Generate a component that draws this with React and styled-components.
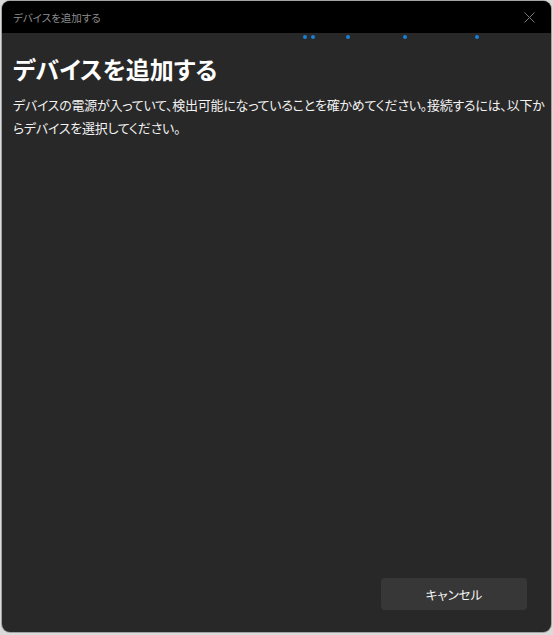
import styled, { createGlobalStyle } from 'styled-components';

const GlobalStyle = createGlobalStyle`
  html, body {
    margin: 0;
    padding: 0;
    background: #dadada;
  }
  body {
    font-family: "Noto Sans CJK JP", "Noto Sans", sans-serif;
    font-feature-settings: "palt";
  }
`;

const Page = styled.div`
  width: 553px;
  height: 635px;
  padding: 1px 2px 3px 2px;
  box-sizing: border-box;
`;

const Window = styled.div`
  height: 100%;
  display: flex;
  flex-direction: column;
  border-radius: 8px;
  overflow: hidden;
  background: #282828;
  box-shadow: 0 0 0 1px rgba(0, 0, 0, 0.25);
`;

const TitleBar = styled.div`
  height: 32px;
  flex: none;
  display: flex;
  align-items: center;
  justify-content: space-between;
  padding: 0 14px 0 11px;
  background: #000;
  color: #8c8c8c;
  font-size: 10.5px;
`;

const CloseButton = styled.button`
  border: none;
  background: none;
  padding: 0;
  width: 16px;
  height: 16px;
  display: flex;
  align-items: center;
  justify-content: center;
  color: #7a7a7a;
`;

const Progress = styled.div`
  position: relative;
  height: 8px;
  flex: none;
`;

const Dot = styled.span`
  position: absolute;
  top: 2px;
  width: 4px;
  height: 4px;
  border-radius: 50%;
  background: #1a7fd6;
`;

const Content = styled.div`
  flex: 1;
  padding: 12px 11px 0;
  color: #fff;
`;

const Heading = styled.h1`
  margin: 0 0 8px;
  font-size: 24px;
  font-weight: 600;
  line-height: 32px;
`;

const Description = styled.p`
  margin: 0;
  font-size: 13px;
  line-height: 23px;
  letter-spacing: -0.25px;
  color: #f2f2f2;
  white-space: nowrap;
`;

const Footer = styled.div`
  display: flex;
  justify-content: flex-end;
  padding: 0 24px 22px;
`;

const Button = styled.button`
  width: 146px;
  height: 32px;
  border: none;
  border-radius: 4px;
  background: #373737;
  color: #f5f5f5;
  font-family: inherit;
  font-feature-settings: "palt";
  font-size: 12.5px;
  cursor: pointer;
`;

const dots = [305, 313, 348, 405, 477];

export default function App() {
  return (
    <>
      <GlobalStyle />
      <Page>
        <Window>
          <TitleBar>
            <span>デバイスを追加する</span>
            <CloseButton aria-label="閉じる">
              <svg width="11" height="11" viewBox="0 0 11 11">
                <path d="M0.5 0.5 L10.5 10.5 M10.5 0.5 L0.5 10.5" stroke="currentColor" strokeWidth="1" />
              </svg>
            </CloseButton>
          </TitleBar>
          <Progress>
            {dots.map((x) => (
              <Dot key={x} style={{ left: x - 4 }} />
            ))}
          </Progress>
          <Content>
            <Heading>デバイスを追加する</Heading>
            <Description>
              デバイスの電源が入っていて、検出可能になっていることを確かめてください。接続するには、以下か
              <br />
              らデバイスを選択してください。
            </Description>
          </Content>
          <Footer>
            <Button>キャンセル</Button>
          </Footer>
        </Window>
      </Page>
    </>
  );
}
